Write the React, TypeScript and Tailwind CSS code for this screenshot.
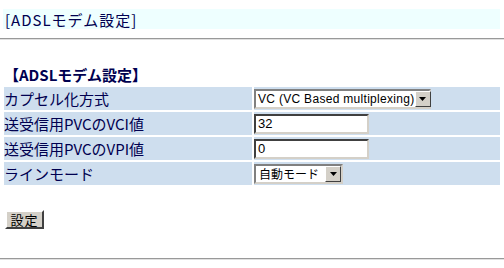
import React from 'react';

const Arrow: React.FC = () => (
    <div className="w-[16px] h-[16px] shrink-0 bg-[#d4d0c8] border border-t-[#ffffff] border-l-[#ffffff] border-r-[#404040] border-b-[#404040] flex items-center justify-center">
        <svg width="7" height="4" viewBox="0 0 7 4">
            <polygon points="0,0 7,0 3.5,4" fill="#000000" />
        </svg>
    </div>
);

const SelectBox: React.FC<{ value: string; width: string; cjk?: boolean }> = ({ value, width, cjk }) => (
    <div className={`${width} h-[20px] flex items-center bg-white border-2 border-t-[#808080] border-l-[#808080] border-r-[#d4d0c8] border-b-[#d4d0c8]`}>
        <span
            className={
                cjk
                    ? 'flex-1 pl-[3px] text-[12px] leading-none text-black whitespace-nowrap'
                    : "flex-1 pl-[2px] font-['Liberation_Sans',sans-serif] text-[12px] tracking-[0.3px] leading-none text-black whitespace-nowrap"
            }
        >
            {value}
        </span>
        <Arrow />
    </div>
);

const TextBox: React.FC<{ value: string }> = ({ value }) => (
    <div className="w-[115px] h-[20px] flex items-center bg-white border-2 border-t-[#404040] border-l-[#404040] border-r-[#d4d0c8] border-b-[#d4d0c8] pl-[2px] font-['Liberation_Sans',sans-serif] text-[13px] leading-none text-black">
        {value}
    </div>
);

const rows: { label: string; field: React.ReactNode }[] = [
    { label: 'カプセル化方式', field: <SelectBox value="VC (VC Based multiplexing)" width="w-[177px]" /> },
    { label: '送受信用PVCのVCI値', field: <TextBox value="32" /> },
    { label: '送受信用PVCのVPI値', field: <TextBox value="0" /> },
    { label: 'ラインモード', field: <SelectBox value="自動モード" width="w-[89px]" cjk /> },
];

const App: React.FC = () => {
    return (
        <div className="w-[504px] h-[268px] bg-white overflow-hidden font-['Noto_Sans_CJK_JP','Noto_Sans',sans-serif] text-[#000050]">
            {/* Título */}
            <div className="pt-[9px] px-[3px]">
                <div className="w-[497px] h-[20px] bg-[#eeffff] flex items-center pl-[2px] text-[15px] tracking-[1px] leading-none">
                    [ADSLモデム設定]
                </div>
            </div>
            <div className="mt-[9px] border-t border-t-[#999999] border-b border-b-[#e0e0e0]" />

            {/* Formulario */}
            <div className="pt-[27px] pl-[4px] text-[15px] font-bold leading-none">【ADSLモデム設定】</div>
            <table className="mt-[3px] ml-[2px] w-[500px] border-separate border-spacing-[2px]">
                <tbody>
                    {rows.map((r) => (
                        <tr key={r.label} className="h-[23px]">
                            <td className="w-[248px] bg-[#cedeee] p-0 text-[15px] leading-none align-middle whitespace-nowrap">{r.label}</td>
                            <td className="bg-[#cedeee] p-0 align-middle">{r.field}</td>
                        </tr>
                    ))}
                </tbody>
            </table>

            <div className="pt-[23px] pl-[5px]">
                <button className="w-[39px] h-[19px] bg-[#d4d0c8] border-2 border-t-[#ffffff] border-l-[#ffffff] border-r-[#404040] border-b-[#404040] text-[13px] tracking-[1px] leading-none text-black flex items-center justify-center">
                    設定
                </button>
            </div>
            <div className="mt-[29px] border-t border-t-[#999999] border-b border-b-[#e0e0e0]" />
        </div>
    );
};

export default App;
